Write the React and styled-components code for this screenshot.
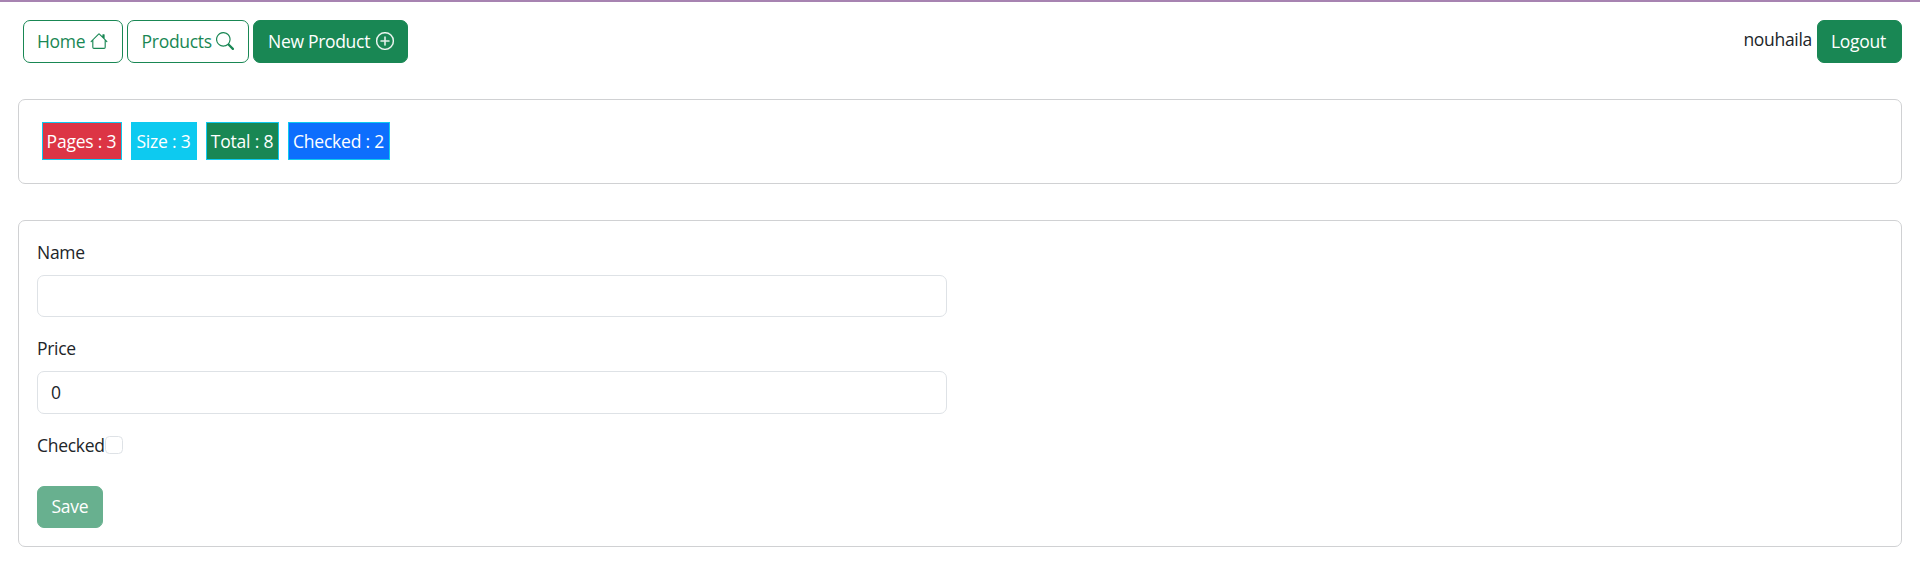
import React from "react";
import styled, { createGlobalStyle } from "styled-components";
import { BsHouse, BsSearch, BsPlusCircle } from "react-icons/bs";

const GlobalStyle = createGlobalStyle`
  *, *::before, *::after { box-sizing: border-box; }
  body {
    margin: 0;
    background: #fff;
    color: #212529;
    font-family: "Segoe UI", "Open Sans", "Noto Sans", sans-serif;
    font-size: 17.5px;
    line-height: 27px;
    letter-spacing: -0.3px;
  }
`;

const Page = styled.div`
  min-height: 585px;
  border-top: 2px solid #a783b1;
  padding: 18px 18px 0;
`;

const Navbar = styled.nav`
  display: flex;
  justify-content: space-between;
  height: 43px;
  padding-left: 5px;
`;

const NavGroup = styled.div`
  display: flex;
  gap: 4px;
`;

const Account = styled.div`
  display: flex;
  gap: 5px;
`;

const UserName = styled.span`
  padding-top: 6px;
`;

const Button = styled.button`
  display: flex;
  align-items: center;
  width: ${(p) => p.$width}px;
  height: ${(p) => p.$height || 43}px;
  padding: 0 13px 0 ${(p) => p.$inset || 13}px;
  border: 1px solid #198754;
  border-radius: 7px;
  background: ${(p) => (p.$solid ? "#198754" : "#fff")};
  color: ${(p) => (p.$solid ? "#fff" : "#198754")};
  font: inherit;
  letter-spacing: inherit;
  white-space: nowrap;

  &:disabled {
    padding-bottom: 2px;
    opacity: 0.65;
  }

  svg {
    flex: none;
    width: 18px;
    height: 18px;
    margin: 0 0 1px ${(p) => p.$iconGap || 5}px;
    stroke-width: ${(p) => (p.$solid ? 0.3 : 0)};
  }
`;

const Card = styled.section`
  height: ${(p) => p.$height}px;
  margin-top: 36px;
  padding: ${(p) => p.$padding};
  border: 1px solid #d0d1d3;
  border-radius: 7px;
`;

const Stats = styled.div`
  display: flex;
  gap: 9px;
`;

const Stat = styled.div`
  width: ${(p) => p.$width}px;
  height: 38px;
  padding: 5px 1px 0 0;
  border: 1px solid #0dcaf0;
  background: ${(p) => p.$color};
  color: #fff;
  letter-spacing: -0.2px;
  text-align: center;
  white-space: nowrap;
`;

const Field = styled.div`
  width: 910px;
  margin-bottom: ${(p) => p.$gap}px;
`;

const Label = styled.label`
  display: block;
  height: 27px;
  margin-bottom: 9px;
`;

const Input = styled.input`
  display: block;
  width: 100%;
  height: ${(p) => p.$height}px;
  padding: 0 13px 1px;
  border: 1px solid #dee2e6;
  border-radius: 7px;
  background: #fff;
  color: #212529;
  font: inherit;
  outline: 0;
`;

const CheckRow = styled.div`
  display: flex;
  height: 27px;
  margin-bottom: 28px;
`;

const CheckLabel = styled.label`
  width: 68px;
  padding-top: 1px;
`;

const Checkbox = styled.input.attrs({ type: "checkbox" })`
  appearance: none;
  width: 18px;
  height: 18px;
  margin: 5px 0 0;
  border: 1px solid #dee2e6;
  border-radius: 4.5px;
  background: #fff;
`;

export default function App() {
  return (
    <>
      <GlobalStyle />
      <Page>
        <Navbar>
          <NavGroup>
            <Button $width={100}>Home <BsHouse /></Button>
            <Button $width={122} $inset={13.6} $iconGap={4.4}>Products <BsSearch /></Button>
            <Button $width={155} $inset={14} $iconGap={5.8} $solid>New Product <BsPlusCircle /></Button>
          </NavGroup>
          <Account>
            <UserName>nouhaila</UserName>
            <Button $width={85} $solid>Logout</Button>
          </Account>
        </Navbar>

        <Card $height={85} $padding="22px 23px">
          <Stats>
            <Stat $width={80} $color="#dc3545">Pages : 3</Stat>
            <Stat $width={66} $color="#0dcaf0">Size : 3</Stat>
            <Stat $width={73} $color="#198754">Total : 8</Stat>
            <Stat $width={102} $color="#0d6efd">Checked : 2</Stat>
          </Stats>
        </Card>

        <Card as="form" $height={327} $padding="18px">
          <Field $gap={18}>
            <Label htmlFor="name">Name</Label>
            <Input id="name" $height={42} />
          </Field>
          <Field $gap={17}>
            <Label htmlFor="price">Price</Label>
            <Input id="price" $height={43} defaultValue="0" />
          </Field>
          <CheckRow>
            <CheckLabel htmlFor="checked">Checked</CheckLabel>
            <Checkbox id="checked" />
          </CheckRow>
          <Button $width={66} $height={42} $inset={13.5} $solid disabled>Save</Button>
        </Card>
      </Page>
    </>
  );
}
